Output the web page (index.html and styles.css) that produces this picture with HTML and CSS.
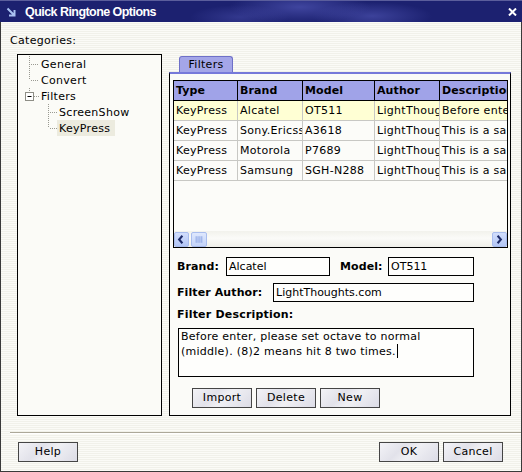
FILE: index.html
```html
<!DOCTYPE html>
<html>
<head>
<meta charset="utf-8">
<title>Quick Ringtone Options</title>
<link rel="stylesheet" href="styles.css">
</head>
<body>
<div class="window">
  <div class="titlebar">
    <svg class="appicon" width="10" height="10" viewBox="0 0 10 10"><path d="M1.5 1.5 L8 8 M8.5 3 V8.5 H3" stroke="#a9c1f2" stroke-width="2" fill="none"/></svg>
    <span class="title">Quick Ringtone Options</span>
    <svg class="close" width="9" height="8" viewBox="0 0 9 8"><path d="M1 0.5 L8 7.5 M8 0.5 L1 7.5" stroke="#fff" stroke-width="2"/></svg>
  </div>
  <div class="client">
    <div class="cat-label">Categories:</div>
    <div class="main">
      <div class="tree">
        <div class="node">
          <svg class="conn" width="23" height="16" viewBox="0 0 23 16"><path class="dots" d="M11.5 0 V16 M13 8.5 H21"/></svg>
          <span class="nlbl">General</span>
        </div>
        <div class="node">
          <svg class="conn" width="23" height="16" viewBox="0 0 23 16"><path class="dots" d="M11.5 0 V8 M13 8.5 H21"/></svg>
          <span class="nlbl">Convert</span>
        </div>
        <div class="node">
          <svg class="conn" width="23" height="16" viewBox="0 0 23 16"><path class="dots" d="M11.5 0 V4 M16 8.5 H21"/><rect x="7.5" y="4.5" width="8" height="8" fill="#fff" stroke="#8e8e86"/><path d="M9.5 8.5 H13.5" stroke="#000" stroke-width="1"/></svg>
          <span class="nlbl">Filters</span>
        </div>
        <div class="node">
          <svg class="conn" width="39" height="16" viewBox="0 0 39 16"><path class="dots" d="M30.5 0 V16 M32 8.5 H39"/></svg>
          <span class="nlbl child">ScreenShow</span>
        </div>
        <div class="node">
          <svg class="conn" width="39" height="16" viewBox="0 0 39 16"><path class="dots" d="M30.5 0 V8 M32 8.5 H39"/></svg>
          <span class="nlbl child selected">KeyPress</span>
        </div>
      </div>
      <div class="tabs">
        <div class="tabstrip"><div class="tab">Filters</div></div>
        <div class="panel">
          <div class="grid">
            <div class="hrow">
              <div class="c">Type</div><div class="c">Brand</div><div class="c">Model</div><div class="c">Author</div><div class="c">Description</div>
            </div>
            <div class="row sel">
              <div class="c">KeyPress</div><div class="c">Alcatel</div><div class="c">OT511</div><div class="c">LightThoughts.com</div><div class="c">Before enter</div>
            </div>
            <div class="row">
              <div class="c">KeyPress</div><div class="c">Sony.Ericsson</div><div class="c">A3618</div><div class="c">LightThoughts.com</div><div class="c">This is a sample</div>
            </div>
            <div class="row">
              <div class="c">KeyPress</div><div class="c">Motorola</div><div class="c">P7689</div><div class="c">LightThoughts.com</div><div class="c">This is a sample</div>
            </div>
            <div class="row">
              <div class="c">KeyPress</div><div class="c">Samsung</div><div class="c">SGH-N288</div><div class="c">LightThoughts.com</div><div class="c">This is a sample</div>
            </div>
            <div class="empty"></div>
            <div class="hscroll">
              <div class="sbtn"><svg width="15" height="15" viewBox="0 0 15 15"><path d="M9 3.5 L5.5 7.5 L9 11.5" stroke="#1f2c6a" stroke-width="2.2" fill="none"/></svg></div>
              <div class="thumb"><svg width="16" height="15" viewBox="0 0 16 15"><path d="M5.5 4 V11 M7.5 4 V11 M9.5 4 V11 M11.5 4 V11" stroke="#8aa2e2" stroke-width="1"/></svg></div>
              <div class="track"></div>
              <div class="sbtn"><svg width="15" height="15" viewBox="0 0 15 15"><path d="M6 3.5 L9.5 7.5 L6 11.5" stroke="#1f2c6a" stroke-width="2.2" fill="none"/></svg></div>
            </div>
          </div>
          <div class="form">
            <div class="frow frow1">
              <span class="flabel w-brand">Brand:</span>
              <div class="inp w-brandin">Alcatel</div>
              <span class="flabel w-model">Model:</span>
              <div class="inp w-modelin">OT511</div>
            </div>
            <div class="frow frow2">
              <span class="flabel w-author">Filter Author:</span>
              <div class="inp w-authorin">LightThoughts.com</div>
            </div>
            <div class="desc-label">Filter Description:</div>
            <div class="textarea">Before enter, please set octave to normal<br>(middle). (8)2 means hit 8 two times.<span class="caret"></span></div>
            <div class="btnrow">
              <div class="btn">Import</div>
              <div class="btn">Delete</div>
              <div class="btn">New</div>
            </div>
          </div>
        </div>
      </div>
    </div>
    <div class="sep"></div>
    <div class="footer">
      <div class="btn">Help</div>
      <div class="btn ok">OK</div>
      <div class="btn">Cancel</div>
    </div>
  </div>
</div>
</body>
</html>
```
FILE: styles.css
```css
* { box-sizing: border-box; }
html, body { margin: 0; padding: 0; }
body {
  width: 522px;
  height: 472px;
  overflow: hidden;
  font-family: "DejaVu Sans", Verdana, sans-serif;
  font-size: 11px;
  letter-spacing: 0.3px;
  color: #000;
  background: #fff;
}
.window {
  width: 522px;
  height: 472px;
  display: flex;
  flex-direction: column;
}
.titlebar {
  height: 22px;
  flex: none;
  display: flex;
  align-items: center;
  padding: 1px 5px 0 6px;
  color: #fff;
  letter-spacing: 0;
  border-top: 1px solid #5b5e9c;
  background:
    radial-gradient(ellipse 70px 16px at 300px 6px, rgba(92, 98, 196, 0.55), rgba(92, 98, 196, 0) 100%),
    radial-gradient(ellipse 60px 14px at 372px 15px, rgba(92, 98, 196, 0.5), rgba(92, 98, 196, 0) 100%),
    radial-gradient(ellipse 50px 12px at 240px 16px, rgba(92, 98, 196, 0.35), rgba(92, 98, 196, 0) 100%),
    #1c2170;
}
.appicon { flex: none; }
.title {
  margin-left: 9px;
  font-family: "Liberation Sans", Arial, sans-serif;
  font-weight: bold;
  font-size: 12.5px;
  letter-spacing: -0.55px;
}
.close { margin-left: auto; flex: none; }

.client {
  flex: 1;
  border: 1px solid #3a3a3a;
  border-top: 0;
  padding: 12px 0 0 9px;
  display: flex;
  flex-direction: column;
  background: repeating-linear-gradient(to bottom, #fbfbf7 0, #fbfbf7 1px, #f1f1ea 1px, #f1f1ea 2px);
}
.cat-label { height: 14px; line-height: 14px; }
.main { display: flex; margin-top: 6px; height: 362px; flex: none; }

.tree {
  width: 145px;
  margin-left: 7px;
  border: 1px solid #000;
  background: #fbfbf7;
  padding-top: 1px;
}
.node { display: flex; height: 16px; align-items: flex-start; }
.conn { flex: none; display: block; }
.dots { stroke: #9a9a92; stroke-width: 1; stroke-dasharray: 1 1; fill: none; }
.nlbl { line-height: 17px; height: 16px; padding-left: 0; }
.nlbl.child { padding: 0 5px 0 2px; }
.nlbl.selected { background: #ecebdf; }

.tabs { width: 342px; margin-left: 7px; display: flex; flex-direction: column; }
.tabstrip { height: 18px; padding: 2px 0 0 10px; display: flex; flex: none; }
.tab {
  width: 54px;
  height: 16px;
  line-height: 15px;
  text-align: center;
  background: #a4a6e8;
  border: 1px solid #6e70c8;
  border-bottom: 0;
  border-radius: 3px 3px 0 0;
}
.panel {
  flex: 1;
  border: 1px solid #000;
  border-top: 2px solid #7679da;
  background: #fbfbf8;
  padding: 6px 0 0 3px;
}
.grid {
  width: 335px;
  height: 168px;
  border: 1px solid #000;
  overflow: hidden;
  display: flex;
  flex-direction: column;
  background: #fcfcf9;
}
.hrow, .row {
  display: grid;
  grid-template-columns: 64px 65px 72px 65px 68px;
  height: 20px;
  flex: none;
  width: 334px;
}
.hrow { background: #a0a3e8; border-bottom: 1px solid #000; font-weight: bold; letter-spacing: 0.1px; }
.hrow .c { border-right: 1px solid #000; }
.row { border-bottom: 1px solid #c8c8c4; }
.row .c { border-right: 1px solid #c8c8c4; }
.row.sel { background: #ffffd4; }
.c { padding-left: 2px; line-height: 19px; white-space: nowrap; overflow: hidden; }
.empty { flex: 1; }
.hscroll {
  height: 16px;
  flex: none;
  display: flex;
  align-items: center;
  background: linear-gradient(to bottom, #f2f2ec, #fbfbf8 45%, #efefe9);
}
.sbtn, .thumb {
  height: 15px;
  border: 1px solid #a9bdee;
  border-radius: 2px;
  background: linear-gradient(to bottom, #d2defc, #b3c6f6);
  display: flex;
}
.sbtn { width: 15px; }
.thumb { width: 16px; margin-left: 2px; background: linear-gradient(to bottom, #dfe8fd, #c3d3f9); }
.sbtn svg, .thumb svg { margin: -1px 0 0 -1px; }
.track { flex: 1; }

.form { padding-left: 4px; }
.frow { display: flex; align-items: center; height: 19px; }
.frow1 { margin-top: 9px; }
.frow2 { margin-top: 7px; }
.flabel { font-weight: bold; flex: none; letter-spacing: 0.1px; }
.w-brand { width: 49px; }
.w-model { width: 48px; margin-left: 10px; }
.w-author { width: 96px; }
.inp {
  height: 19px;
  border: 1px solid #000;
  background: #fefefc;
  padding-left: 2px;
  line-height: 17px;
  letter-spacing: 0;
  flex: none;
}
.w-brandin { width: 104px; }
.w-modelin { width: 86px; }
.w-authorin { width: 201px; }
.desc-label { font-weight: bold; margin-top: 6px; height: 14px; line-height: 14px; letter-spacing: 0.2px; }
.textarea {
  margin: 6px 0 0 1px;
  width: 296px;
  height: 49px;
  border: 1px solid #000;
  background: #fefefc;
  padding: 0 0 0 2px;
  line-height: 15px;
  letter-spacing: 0.25px;
}
.caret {
  display: inline-block;
  width: 1px;
  height: 14px;
  background: #000;
  vertical-align: -3px;
  margin-left: 1px;
}
.btnrow { display: flex; gap: 4px; margin: 11px 0 0 15px; }
.btn {
  width: 60px;
  height: 20px;
  border: 1px solid #454545;
  background: linear-gradient(135deg, #f3f3f7 0%, #e2e2ea 35%, #f0f0f4 55%, #dcdce6 100%);
  text-align: center;
  line-height: 18px;
  flex: none;
}

.sep {
  height: 2px;
  margin-top: 16px;
  border-top: 1px solid #aca899;
  border-bottom: 1px solid #ffffff;
  flex: none;
}
.footer { display: flex; gap: 4px; margin-top: 8px; padding: 0 18px 0 8px; }
.footer .ok { margin-left: auto; }
```
